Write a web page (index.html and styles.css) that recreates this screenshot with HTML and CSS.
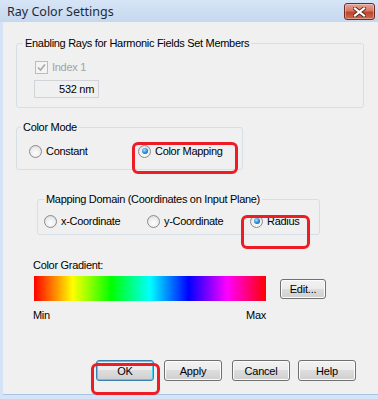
FILE: index.html
```html
<!DOCTYPE html>
<html lang="en">
<head>
  <meta charset="UTF-8">
  <title>Ray Color Settings</title>
  <link rel="stylesheet" href="styles.css">
</head>
<body>
<div class="window">
  <div class="titlebar">
    <span class="title">Ray Color Settings</span>
    <button class="close" type="button">
      <svg width="13" height="10" viewBox="0 0 13 10">
        <path d="M2 1.5 L11 8.5 M11 1.5 L2 8.5" stroke="#5a2a22" stroke-width="4" stroke-linecap="square"/>
        <path d="M2 1.5 L11 8.5 M11 1.5 L2 8.5" stroke="#fff" stroke-width="2.2" stroke-linecap="square"/>
      </svg>
    </button>
  </div>
  <div class="client">
    <fieldset class="group members">
      <legend>Enabling Rays for Harmonic Fields Set Members</legend>
      <div class="members-body">
        <div class="check disabled">
          <span class="checkbox">
            <svg width="11" height="11" viewBox="0 0 11 11"><path d="M2 5.5 L4.5 8 L9 2.5" fill="none" stroke="#a8a8a8" stroke-width="1.6"/></svg>
          </span>
          Index 1
        </div>
        <div class="textbox">532 nm</div>
      </div>
    </fieldset>

    <fieldset class="group mode">
      <legend>Color Mode</legend>
      <div class="options mode-options">
        <label class="option"><span class="radio"></span>Constant</label>
        <label class="option"><span class="radio on"></span>Color Mapping</label>
      </div>
    </fieldset>

    <fieldset class="group domain">
      <legend>Mapping Domain (Coordinates on Input Plane)</legend>
      <div class="options domain-options">
        <label class="option"><span class="radio"></span>x-Coordinate</label>
        <label class="option"><span class="radio"></span>y-Coordinate</label>
        <label class="option"><span class="radio on"></span>Radius</label>
      </div>
    </fieldset>

    <div class="gradient-block">
      <div class="caption">Color Gradient:</div>
      <div class="gradient-row">
        <div class="spectrum"></div>
        <button class="btn edit" type="button">Edit...</button>
      </div>
      <div class="range"><span>Min</span><span>Max</span></div>
    </div>

    <div class="actions">
      <button class="btn default" type="button">OK</button>
      <button class="btn" type="button">Apply</button>
      <button class="btn" type="button">Cancel</button>
      <button class="btn" type="button">Help</button>
    </div>

    <div class="mark mark-mapping"></div>
    <div class="mark mark-radius"></div>
    <div class="mark mark-ok"></div>
  </div>
</div>
</body>
</html>
```

FILE: styles.css
```css
* {
  box-sizing: border-box;
}
body {
  margin: 0;
  font-family: "Liberation Sans", Arial, sans-serif;
  font-size: 11px;
  letter-spacing: -0.3px;
  color: #000;
  background: #fff;
}
.window {
  width: 378px;
  height: 399px;
  display: flex;
  flex-direction: column;
  background: #d4e3f5;
  overflow: hidden;
}
.titlebar {
  height: 22px;
  flex: none;
  display: flex;
  align-items: center;
  justify-content: space-between;
  padding: 0 3px 0 7px;
  background: linear-gradient(#d6e5f6, #c6d8ee);
}
.title {
  font-family: "Noto Sans", sans-serif;
  font-size: 12.5px;
  letter-spacing: 0;
  color: #1e2a3a;
}
.close {
  width: 31px;
  height: 17px;
  padding: 0;
  margin-top: 1px;
  border: 1px solid #6d2a22;
  border-radius: 3px;
  display: flex;
  align-items: center;
  justify-content: center;
  background: linear-gradient(#e9a597 0, #d57966 45%, #c0442f 55%, #cc6a4f 100%);
  box-shadow: inset 0 0 0 1px rgba(255, 255, 255, 0.35);
}
.client {
  flex: 1;
  position: relative;
  margin: 0 0 4px 3px;
  background: #f0f0f0;
  border-bottom: 1px solid #a9c3e2;
}

/* group boxes */
.group {
  margin: 0;
  padding: 0;
  min-width: 0;
  border: 1px solid #d5dfe5;
  border-radius: 3px;
}
.group legend {
  padding: 0 2px;
  line-height: 14px;
}
.members {
  margin: 14px 14px 0 13px;
}
.members legend {
  margin-left: 6px;
}
.members-body {
  padding: 10px 0 9px 18px;
}
.check {
  display: flex;
  align-items: center;
  gap: 4px;
  height: 14px;
}
.check.disabled {
  color: #a3a3a3;
}
.checkbox {
  width: 13px;
  height: 13px;
  border: 1px solid #bcbcbc;
  background: #f4f4f4;
  display: flex;
  align-items: center;
  justify-content: center;
}
.textbox {
  width: 65px;
  height: 18px;
  margin: 6px 0 0 -1px;
  padding: 0 4px;
  border: 1px solid #d0d4d9;
  line-height: 16px;
  text-align: right;
}

.mode {
  width: 227px;
  margin: 12px 0 0 13px;
}
.mode legend {
  margin-left: 4px;
}
.options {
  display: flex;
  height: 14px;
  align-items: center;
}
.mode-options {
  margin: 10px 0 11px 12px;
}
.mode-options .option:first-child {
  width: 109px;
}
.domain {
  width: 283px;
  margin: 22px 0 0 34px;
}
.domain legend {
  margin-left: 6px;
}
.domain-options {
  margin: 8px 0 6px 6px;
}
.domain-options .option {
  width: 103px;
}
.option {
  flex: none;
  display: flex;
  align-items: center;
  gap: 4px;
  white-space: nowrap;
}
.radio {
  flex: none;
  width: 13px;
  height: 13px;
  border-radius: 50%;
  border: 1px solid #8c8c8c;
  background: radial-gradient(circle at 50% 65%, #ffffff 0, #ececec 55%, #cfcfcf 100%);
  display: flex;
  align-items: center;
  justify-content: center;
}
.radio.on::after {
  content: "";
  width: 6px;
  height: 6px;
  border-radius: 50%;
  background: radial-gradient(circle at 40% 35%, #a6e4ff 0, #2a86d0 55%, #0b3c74 100%);
}

/* gradient */
.gradient-block {
  margin: 23px 0 0 30px;
}
.caption {
  line-height: 14px;
}
.gradient-row {
  display: flex;
  align-items: center;
  gap: 14px;
  margin-top: 4px;
}
.spectrum {
  width: 232px;
  height: 25px;
  margin-left: 1px;
  background: linear-gradient(to right, #f00, #ff0, #0f0, #0ff, #00f, #f0f, #f00);
}
.range {
  width: 233px;
  display: flex;
  justify-content: space-between;
  margin-top: 7px;
  line-height: 14px;
}

/* buttons */
.btn {
  height: 21px;
  width: 58px;
  padding: 0;
  font-family: "Liberation Sans", Arial, sans-serif;
  font-size: 11px;
  letter-spacing: -0.2px;
  color: #000;
  border: 1px solid #707070;
  border-radius: 3px;
  background: linear-gradient(#f2f2f2 0, #ebebeb 50%, #dddddd 50%, #cfcfcf 100%);
  box-shadow: inset 0 0 0 1px #fcfcfc;
}
.btn.edit {
  width: 46px;
  height: 20px;
}
.btn.default {
  border-color: #3c7fb1;
  box-shadow: inset 0 0 0 1px #48d0f6;
}
.actions {
  display: flex;
  gap: 10px;
  margin: 38px 0 0 93px;
}
.actions .btn:last-child {
  margin-left: -2px;
}

/* red annotation boxes */
.mark {
  position: absolute;
  border: 3px solid #ee1c24;
  border-radius: 6px;
}
.mark-mapping {
  left: 129px;
  top: 120px;
  width: 106px;
  height: 32px;
}
.mark-radius {
  left: 238px;
  top: 193px;
  width: 69px;
  height: 34px;
}
.mark-ok {
  left: 88px;
  top: 341px;
  width: 69px;
  height: 32px;
}
```
